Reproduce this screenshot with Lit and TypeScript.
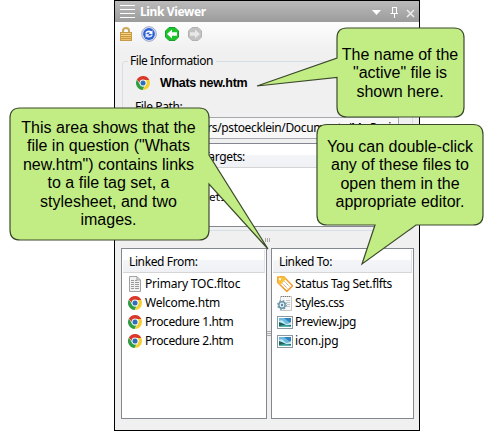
import { LitElement, html, svg, css } from "lit";
import { customElement, property } from "lit/decorators.js";

const chrome = svg`<circle cx="8" cy="8" r="7" fill="#fff"/>
<path d="M1.9 4.5A7 7 0 0 1 14.3 5H8A3.3 3.3 0 0 0 4.9 7.9Z" fill="#d8392b"/>
<path d="M14.3 5A7 7 0 0 1 7.6 15L11 9.4A3.3 3.3 0 0 0 10.4 5Z" fill="#f6cf2f"/>
<path d="M1.9 4.5L5 9.5A3.3 3.3 0 0 0 9.5 11L7.6 15A7 7 0 0 1 1.9 4.5Z" fill="#2f9e43"/>
<circle cx="8" cy="8" r="3.4" fill="#eef3f8"/><circle cx="8" cy="8" r="2.5" fill="#2e70b8"/>`;

const picture = svg`<rect x=".5" y="2.5" width="15" height="12" fill="#fff" stroke="#8c979f"/>
<rect x="2" y="4" width="12" height="9" fill="#2f82bd"/><path d="M2 4H7L13 9H2Z" fill="#6fb9de"/><path d="M2 7Q5 5 7 8T14 8V11H2Z" fill="#c3ebf4"/>
<path d="M2 8Q6 9 8 10.500T14 11V13H2Z" fill="#19645c"/><path d="M2 12Q8 10.500 14 12V13H2Z" fill="#58b4b0"/>`;

const icons: Record<string, unknown> = {
  chrome,
  picture,
  lock: svg`<path d="M5 8V4.500Q5 2 8 2T11 4.500V8" fill="none" stroke="#cda75c" stroke-width="2"/>
<rect x="2.500" y="6.500" width="11" height="8" fill="#ecc269" stroke="#c69c48"/><path d="M3 8.500H13M3 10.500H13M3 12.500H13" stroke="#c9983f"/><path d="M3 7.500H13M3 9.500H13" stroke="#f8dc92" stroke-width=".6"/>`,
  sync: svg`<circle cx="8" cy="8" r="7.300" fill="#dfe4f3" stroke="#9aa5c8"/><circle cx="8" cy="8" r="5.900" fill="#2c5fd0"/>
<path d="M4.200 7.400Q4.800 4.400 8 4.400Q9.500 4.400 10.400 5.300L11.500 4.300V8H7.800L9 6.800Q6.800 5.500 5.700 7.600Z" fill="#fff"/><path d="M11.800 8.600Q11.200 11.600 8 11.600Q6.500 11.600 5.600 10.700L4.500 11.700V8H8.200L7 9.200Q9.200 10.500 10.300 8.400Z" fill="#dce8ff"/>`,
  back: svg`<path d="M5 1.500H11L14.500 5V11L11 14.500H5L1.500 11V5Z" fill="#1cc42a" stroke="#18a02c"/><path d="M3 8L8 3.500V6.300H13V9.700H8V12.500Z" fill="#fff"/>`,
  next: svg`<path d="M5 1.500H11L14.500 5V11L11 14.500H5L1.500 11V5Z" fill="#c2c2c2" stroke="#b2b2b2"/><path d="M13 8L8 3.500V6.300H3V9.700H8V12.500Z" fill="#e8e8e8"/>`,
  doc: svg`<path d="M2.500.5H10L13.500 4V15.500H2.500Z" fill="#f2f2f2" stroke="#a2a2a2"/><path d="M10 1V4H13" fill="none" stroke="#999"/>
<path d="M4 4.500H7M8 4.500H10M4 6.500H7M8 6.500H12M4 8.500H7M8 8.500H12M4 10.500H7M8 10.500H12M4 12.500H7M8 12.500H12" stroke="#999"/>`,
  tag: svg`<path d="M.7 1.200L6.500.5L15.600 9.800L9.800 15.400L.7 6.500Z" fill="#fff" stroke="#f59b2c" stroke-width="1.500"/><path d="M.7 1.200L6.500.5L9 3L3.200 9L.7 6.500Z" fill="#f9c03a"/><circle cx="3" cy="3.200" r="1.100" fill="#fff"/>
<path d="M7.500 5.500L12.500 10.500M5.500 7.500L10.500 12.500" stroke="#c39a62" stroke-dasharray="1.200 .7"/>`,
  css: svg`<path d="M3.500 1.500H14.500V15.500H3.500Z" fill="#f7f7f7" stroke="#c6c6c6"/><path d="M4 1.500H14" stroke="#777" stroke-dasharray="1 1"/><path d="M9 5.500H13M10 7.500H13M10 9.500H13M10 11.500H13" stroke="#c4c4c4"/>
<circle cx="5" cy="10" r="3.200" fill="#e5f0f5" stroke="#6d97a9" stroke-width="1.500"/><circle cx="5" cy="10" r="4.300" fill="none" stroke="#6d97a9" stroke-width="1.300" stroke-dasharray="1.600 1.800"/><circle cx="5" cy="10" r="1.200" fill="#66899a"/>`,
};

@customElement("ui-icon")
class UiIcon extends LitElement {
  @property() name = "";
  static styles = css`:host{display:block;width:16px;height:16px;flex:none}svg{display:block}`;
  render() {
    return html`<svg width="16" height="16" viewBox="0 0 16 16">${icons[this.name]}</svg>`;
  }
}

@customElement("file-list")
class FileList extends LitElement {
  @property() heading = "";
  @property({ attribute: false }) files: string[][] = [];
  static styles = css`
    :host{display:block;box-sizing:border-box;border:1px solid #828790;background:#fff;padding:1px}
    .head{height:23px;box-sizing:border-box;padding:3px 0 0 6px;line-height:17px;background:linear-gradient(#fff 45%,#f3f5f8 46%,#eff1f4);border-bottom:1px solid #d5d5d5;border-right:1px solid #dfe3e8;letter-spacing:-.38px}
    .row{display:flex;align-items:center;height:19px;gap:2px;padding-left:4px;white-space:nowrap}
    .rows{padding-top:1px}
    .name{line-height:17px}
  `;
  render() {
    return html`<div class="head">${this.heading}</div>
      <div class="rows">${this.files.map(([i, n, s]) => html`<div class="row"><ui-icon name=${i}></ui-icon><span class="name" style="letter-spacing:${s}px">${n}</span></div>`)}</div>`;
  }
}

@customElement("app-root")
class AppRoot extends LitElement {
  static styles = css`
    :host{display:block;position:relative;width:493px;height:431px;overflow:hidden;background:#fff;color:#000;font:12px/17px "Noto Sans",sans-serif}
    .panel{box-sizing:border-box;width:306px;height:431px;margin-left:114px;border:1px solid #000;background:#f0f0f0;display:flex;flex-direction:column}
    .title{height:21px;flex:none;display:flex;align-items:center;background:linear-gradient(#bbb,#9b9b9b);color:#fff;font-weight:700;padding:0 3px 0 5px;letter-spacing:-.37px}
    .grip{width:15px;height:13px;margin-right:5px;background:repeating-linear-gradient(#fff 0 1px,transparent 1px 4px)}
    .title span{flex:1}
    .tools{height:29px;flex:none;display:flex;align-items:flex-start;gap:7px;padding:4px 0 0 3px;box-sizing:border-box;background:linear-gradient(#fdfdfd,#f0f0f0)}
    .group{box-sizing:border-box;height:170px;flex:none;margin:10px 6px 0 7px;border:1px solid #d5dfe5;border-radius:3px}
    .legend{display:table;margin:-10px 0 0 5px;padding:0 3px 0 2px;background:#f0f0f0;height:18px;letter-spacing:-.45px}
    .active{display:flex;align-items:center;gap:9px;height:26px;padding-left:12px;font:bold 12.5px "Liberation Sans",sans-serif;letter-spacing:-.3px}
    .label{margin:2px 0 0 12px;height:19px;letter-spacing:-.4px}
    .path{height:22px;box-sizing:border-box;margin:0 13px 4px 10px;border:1px solid #a5a8ad;background:#f7f7f7;padding:1px 0 0 53px;white-space:nowrap;letter-spacing:-.36px}
    .targets{height:84px;box-sizing:border-box;margin:0 7px 0 10px;border:1px solid #828790;background:#fff;padding:1px}
    .thead{height:23px;box-sizing:border-box;background:linear-gradient(#fff 45%,#f3f5f8 46%,#eff1f4);border-bottom:1px solid #d5d5d5;padding:3px 0 0 68px;letter-spacing:-.35px}
    .set{font:11px "DejaVu Sans Mono",monospace;padding:23px 0 0 74px;letter-spacing:-1px}
    .lists{display:grid;grid-template-columns:146px 143px;gap:4px;height:171px;margin:17px 0 0 6px}
    .callouts{position:absolute;left:0;top:0}
    .note{position:absolute;font:16px/18.4px "Liberation Sans",Arial,sans-serif;text-align:center;white-space:nowrap}
    .n1{left:338px;top:46px;width:124px}.n2{left:9px;top:119px;width:199px}.n3{left:317px;top:138px;width:166px}
    .split{position:absolute}
    .s1{left:264px;top:238px}.s2{left:267px;top:331px}
  `;
  render() {
    return html`<div class="panel">
      <div class="title"><div class="grip"></div><span>Link Viewer</span>
        <svg width="48" height="20"><path d="M4 8H13L8.500 13Z" fill="#fff"/><path d="M24 5.500H29M24.500 5V11M28.500 5V11M22.500 11.500H30M26.500 12V16" stroke="#fff" fill="none"/><path d="M39 8L46 15M46 8L39 15" stroke="#eee" stroke-width="1.500"/></svg></div>
      <div class="tools"><ui-icon name="lock"></ui-icon><ui-icon name="sync"></ui-icon><ui-icon name="back"></ui-icon><ui-icon name="next"></ui-icon></div>
      <div class="group"><div class="legend">File Information</div>
        <div class="active"><ui-icon name="chrome"></ui-icon>Whats new.htm</div>
        <div class="label">File Path:</div>
        <div class="path">Users/pstoecklein/Documents/My Proj</div>
        <div class="targets"><div class="thead">Targets:</div><div class="set">etI</div></div>
      </div>
      <div class="lists">
        <file-list heading="Linked From:" .files=${[["doc", "Primary TOC.fltoc", "-.2"], ["chrome", "Welcome.htm", "-.28"], ["chrome", "Procedure 1.htm", "-.4"], ["chrome", "Procedure 2.htm", "-.4"]]}></file-list>
        <file-list heading="Linked To:" .files=${[["tag", "Status Tag Set.flfts", "-.33"], ["css", "Styles.css", "-.42"], ["picture", "Preview.jpg", "-.28"], ["picture", "icon.jpg", "-.15"]]}></file-list>
      </div></div>
      <svg class="split s1" width="7" height="5"><path d="M1.500 0V4M3.500 0V4M5.500 0V4" stroke="#aaa"/></svg>
      <svg class="split s2" width="4" height="6"><path d="M0 .5H4M0 2.500H4M0 4.500H4" stroke="#aaa"/></svg>
      <svg class="callouts" width="493" height="431" fill="#c2ed85" stroke="#3c4a2c" stroke-width="1.200">
        <path d="M347 28H454Q464 28 464 38V107Q464 117 454 117H347Q337 117 337 107V77.500L257 86L337 58V38Q337 28 347 28Z"/>
        <path d="M20 108H199Q209 108 209 118V155L268 249L209 184V230Q209 240 199 240H20Q10 240 10 230V118Q10 108 20 108Z"/>
        <path d="M327 124.500H473Q483 124.500 483 134.500V215Q483 225 473 225H416L362 264L375 225H327Q317 225 317 215V134.500Q317 124.500 327 124.500Z"/>
      </svg>
      <div class="note n1">The name of the<br>"active" file is<br>shown here.</div>
      <div class="note n2">This area shows that the<br>file in question ("Whats<br>new.htm") contains links<br>to a file tag set, a<br>stylesheet, and two<br>images.</div>
      <div class="note n3">You can double-click<br>any of these files to<br>open them in the<br>appropriate editor.</div>`;
  }
}
